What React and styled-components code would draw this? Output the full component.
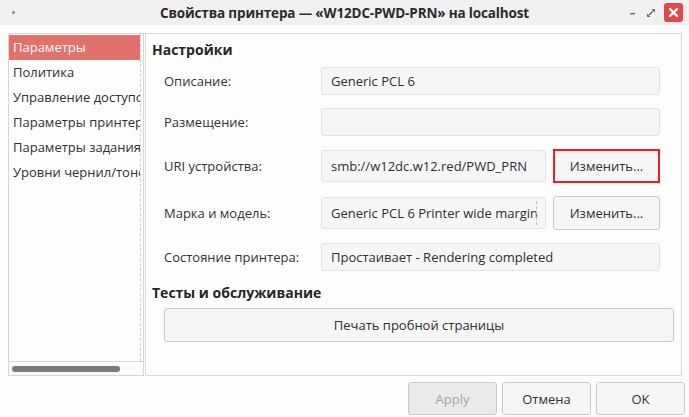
import React from 'react';
import styled, {createGlobalStyle} from 'styled-components';

const GlobalStyle = createGlobalStyle`
  html, body {
    margin: 0;
    padding: 0;
    background: #fdfdfd;
  }
  body {
    font-family: "Open Sans", "Noto Sans", sans-serif;
    font-size: 13px;
    color: #303030;
  }
`;

const Window = styled.div`
  width: 689px;
  height: 417px;
  display: flex;
  flex-direction: column;
  background: #fdfdfd;
  overflow: hidden;
`;

const TitleBar = styled.div`
  height: 25px;
  flex: none;
  display: flex;
  align-items: center;
  background: #f0f0f0;
  padding: 0 6px 0 12px;
`;

const MenuDot = styled.span`
  width: 3px;
  height: 3px;
  border-radius: 50%;
  background: #8a8a8a;
`;

const Title = styled.div`
  flex: 1;
  text-align: center;
  font-weight: 700;
  font-size: 13.5px;
  letter-spacing: -0.15px;
  color: #2b2b2b;
  padding-left: 46px;
`;

const Controls = styled.div`
  display: flex;
  align-items: center;
  gap: 8px;
`;

const CtrlIcon = styled.svg`
  display: block;
`;

const CloseBtn = styled.div`
  width: 19px;
  height: 19px;
  border-radius: 3px;
  background: #e5484b;
  display: flex;
  align-items: center;
  justify-content: center;
`;

const Body = styled.div`
  flex: 1;
  display: flex;
  flex-direction: column;
  padding: 8px 4px 3px 8px;
`;

const Main = styled.div`
  display: flex;
  height: 343px;
  padding-right: 5px;
`;

const SideList = styled.div`
  width: 134px;
  border: 1px solid #d6d6d6;
  display: flex;
  flex-direction: column;
  flex: none;
`;

const Items = styled.div`
  flex: 1;
  margin-right: 2px;
  border-right: 1px dashed #cfcfcf;
  padding-top: 1px;
  overflow: hidden;
`;

const Item = styled.div`
  height: 25px;
  line-height: 25px;
  padding-left: 4px;
  white-space: nowrap;
  overflow: hidden;
  background: ${({active}) => (active ? '#e0716b' : 'transparent')};
  color: ${({active}) => (active ? '#ffffff' : '#303030')};
`;

const HScroll = styled.div`
  height: 13px;
  border-top: 1px solid #d6d6d6;
  display: flex;
  align-items: center;
  padding-left: 3px;
`;

const Thumb = styled.div`
  width: 108px;
  height: 6px;
  border-radius: 3px;
  background: #777b7f;
`;

const Panel = styled.div`
  flex: 1;
  margin-left: 1px;
  border: 1px solid #d8d8d8;
  padding: 6px 7px 0 6px;
  display: flex;
  flex-direction: column;
`;

const Heading = styled.div`
  font-weight: 700;
  font-size: 14px;
  color: #262626;
  line-height: 20px;
  margin-top: ${({top}) => top || 0}px;
  margin-bottom: ${({gap}) => gap}px;
`;

const Form = styled.div`
  display: grid;
  grid-template-columns: 150px 225px 109px;
  column-gap: 7px;
  row-gap: 13px;
  align-items: center;
  padding-left: 12px;
`;

const Label = styled.div`
  color: #333;
`;

const Field = styled.div`
  grid-column: ${({wide}) => (wide ? 'span 2' : 'auto')};
  height: ${({tall}) => (tall ? 32 : 28)}px;
  box-sizing: border-box;
  border: 1px solid #e2e2e2;
  border-radius: 3px;
  background: #f6f6f6;
  padding: 0 9px;
  display: flex;
  align-items: center;
  white-space: nowrap;
  overflow: hidden;
  color: #303030;
  position: relative;
  ${({wide}) => wide && 'margin-right: 2px;'}
`;

const Fade = styled.span`
  position: absolute;
  right: 8px;
  top: 3px;
  bottom: 3px;
  border-right: 1px dashed #bdbdbd;
`;

const Button = styled.button`
  font-family: inherit;
  font-size: 13px;
  color: ${({disabled}) => (disabled ? '#a6a6a6' : '#303030')};
  background: ${({disabled}) => (disabled ? '#ebebeb' : '#f6f6f6')};
  border: ${({focus}) => (focus ? '2px solid #ee1c25' : '1px solid #c9c9c9')};
  border-radius: ${({focus}) => (focus ? '0' : '3px')};
  box-sizing: border-box;
  height: ${({h}) => h || 34}px;
  width: ${({w}) => (w ? w + 'px' : 'auto')};
  padding: 0;
  cursor: default;
`;

const PrintRow = styled.div`
  padding-left: 12px;
`;

const PrintButton = styled(Button)`
  width: 510px;
  height: 34px;
`;

const Footer = styled.div`
  display: flex;
  justify-content: flex-end;
  gap: 5px;
  margin-top: 6px;
`;

const items = [
    'Параметры',
    'Политика',
    'Управление доступом',
    'Параметры принтера',
    'Параметры задания',
    'Уровни чернил/тонера',
];

const App = () => {
    return (
        <Window>
            <GlobalStyle/>
            <TitleBar>
                <MenuDot/>
                <Title>Свойства принтера — «W12DC-PWD-PRN» на localhost</Title>
                <Controls>
                    <CtrlIcon width="10" height="10" viewBox="0 0 10 10">
                        <rect x="2" y="5" width="5" height="1.4" fill="#6a6a6a"/>
                    </CtrlIcon>
                    <CtrlIcon width="10" height="10" viewBox="0 0 10 10">
                        <path d="M5.5 1 L9 1 L9 4.5 Z" fill="#6a6a6a"/>
                        <path d="M1 5.5 L1 9 L4.5 9 Z" fill="#6a6a6a"/>
                        <path d="M3 7 L7 3" stroke="#6a6a6a" strokeWidth="1.4"/>
                    </CtrlIcon>
                    <CloseBtn>
                        <svg width="11" height="11" viewBox="0 0 11 11">
                            <path d="M2 2 L9 9 M9 2 L2 9" stroke="#fff" strokeWidth="2.4" strokeLinecap="round"/>
                        </svg>
                    </CloseBtn>
                </Controls>
            </TitleBar>
            <Body>
                <Main>
                    <SideList>
                        <Items>
                            {items.map((t, i) => (
                                <Item key={t} active={i === 0}>{t}</Item>
                            ))}
                        </Items>
                        <HScroll><Thumb/></HScroll>
                    </SideList>
                    <Panel>
                        <Heading gap={7}>Настройки</Heading>
                        <Form>
                            <Label>Описание:</Label>
                            <Field wide>Generic PCL 6</Field>

                            <Label>Размещение:</Label>
                            <Field wide/>

                            <Label>URI устройства:</Label>
                            <Field tall>smb://w12dc.w12.red/PWD_PRN</Field>
                            <Button focus w={107}>Изменить...</Button>

                            <Label>Марка и модель:</Label>
                            <Field tall>Generic PCL 6 Printer wide margin<Fade/></Field>
                            <Button w={107}>Изменить...</Button>

                            <Label>Состояние принтера:</Label>
                            <Field wide>Простаивает - Rendering completed</Field>
                        </Form>
                        <Heading top={12} gap={5}>Тесты и обслуживание</Heading>
                        <PrintRow>
                            <PrintButton>Печать пробной страницы</PrintButton>
                        </PrintRow>
                    </Panel>
                </Main>
                <Footer>
                    <Button disabled w={89} h={33}>Apply</Button>
                    <Button w={89} h={33}>Отмена</Button>
                    <Button w={89} h={33}>OK</Button>
                </Footer>
            </Body>
        </Window>
    );
};

export default App;
